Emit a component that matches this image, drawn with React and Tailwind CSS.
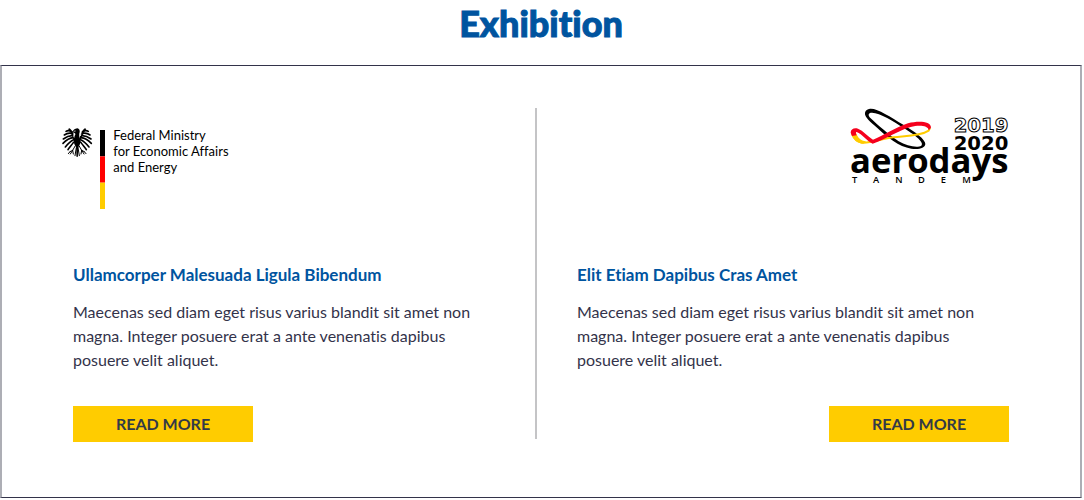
const FEATHERS = [
  "M66 51 C59 46 53 46 48 49",
  "M68 56 C59 53 50 55 43 60",
  "M69 62 C59 61 48 66 40 72",
  "M70 68 C60 69 48 76 39 85",
  "M71 74 C63 77 53 87 46 96",
  "M72 81 C67 86 60 96 54 104",
];

function Wing() {
  return (
    <g fill="none" stroke="#000" strokeLinecap="round" strokeLinejoin="round">
      {FEATHERS.map((d) => (
        <path key={d} d={d} strokeWidth="4.8" />
      ))}
      <path d="M58 43 C66 48 68 62 74 74 L76 86" strokeWidth="6" />
      <path d="M76 92 L68 106 L60 110 M68 106 L61 117 M68 106 L70 117 M60 110 L55 116" strokeWidth="3" />
      <path d="M79 98 L75 122 M80 98 L81 124" strokeWidth="3" />
    </g>
  );
}

function MinistryLogo() {
  return (
    <svg
      viewBox="36 36 501 249"
      className="-ml-[11px] mt-[19px] h-[83px] w-[167px] shrink-0"
      role="img"
      aria-label="Federal Ministry for Economic Affairs and Energy"
    >
      <Wing />
      <g transform="translate(163 0) scale(-1 1)">
        <Wing />
      </g>
      <path d="M74 62 C78 57 76 54 72 53 L66 52 C69 47 74 40 82 40 C89 41 91 49 88 55 C87 62 88 66 89 72 L89 88 L82 104 L74 88 L74 72 Z" fill="#000" />
      <path d="M71 49 L77 48" stroke="#fff" strokeWidth="2" />
      <path d="M73 57 C71 60 70 63 72 67 M91 46 C93 52 93 58 91 63" fill="none" stroke="#fff" strokeWidth="2.5" />
      <rect x="150" y="45" width="15" height="79" fill="#000" />
      <rect x="150" y="124" width="15" height="79" fill="#f00" />
      <rect x="150" y="203" width="15" height="79" fill="#fc0" />
      <g fill="#000" className="font-['Lato',sans-serif]" fontSize="39">
        <text x="190" y="76">Federal Ministry</text>
        <text x="190" y="123">for Economic Affairs</text>
        <text x="190" y="170">and Energy</text>
      </g>
    </svg>
  );
}

function AerodaysLogo() {
  return (
    <svg
      viewBox="27 24 480 231"
      className="ml-auto h-[77px] w-[160px] shrink-0"
      role="img"
      aria-label="Aerodays Tandem 2019 2020"
    >
      <path
        fillRule="evenodd"
        fill="#000"
        d="M90 26 C112 24 150 50 190 74 C226 96 256 118 256 132 C255 145 236 149 214 146 C176 140 142 112 112 84 C92 66 72 50 75 38 C77 30 82 27 90 26 Z M96 38 C84 38 83 46 92 55 C112 74 148 106 176 124 C200 138 232 144 244 137 C254 128 226 106 196 87 C160 64 120 38 96 38 Z"
      />
      <path
        d="M36 102 C42 118 52 126 66 128 C84 131 112 121 142 115 C180 107 236 112 266 92 L270 84"
        fill="none"
        stroke="#fc0"
        strokeWidth="6"
      />
      <path d="M34 98 C38 118 52 130 70 131 L78 124 C62 122 54 114 48 98 Z" fill="#fc0" />
      <path
        d="M32 98 C32 88 42 82 54 86 C70 92 82 108 99 119 C130 108 166 82 204 70 C236 62 272 64 273 82 C272 86 270 88 266 90 C264 78 240 74 212 81 C172 92 134 120 98 131 C82 124 66 102 50 96 C46 96 48 102 50 106 L36 108 Z"
        fill="#f5001d"
      />
      <g fontWeight="700">
        <g className="font-['DejaVu_Sans',sans-serif]" fontSize="59">
          <text x="341" y="95" fill="#fff" stroke="#000" strokeWidth="3">2019</text>
          <text x="341" y="150" fill="#000">2020</text>
        </g>
        <g className="font-['Open_Sans','Noto_Sans',sans-serif]" fill="#000">
          <text x="30" y="220" fontSize="104">aerodays</text>
          <text x="36 99 166 234 302 367" y="250" fontSize="28" fontWeight="600">TANDEM</text>
        </g>
      </g>
    </svg>
  );
}

function Exhibitor({ logo, title, alignEnd }) {
  return (
    <article className="flex min-w-0 flex-1 flex-col">
      <div className="flex h-[155px] items-start">{logo}</div>
      <h2 className="text-[17px] leading-6 font-bold text-[#00549f]">{title}</h2>
      <p className="mt-[13px] text-base leading-6 text-[#33334a]">
        Maecenas sed diam eget risus varius blandit sit amet non magna. Integer posuere erat a ante venenatis dapibus
        posuere velit aliquet.
      </p>
      <button
        type="button"
        className={
          "mt-[34px] h-9 w-[180px] cursor-pointer bg-[#fc0] text-base font-bold text-[#333a47] " +
          (alignEnd ? "self-end" : "self-start")
        }
      >
        READ MORE
      </button>
    </article>
  );
}

export default function App() {
  return (
    <main className="bg-white pr-[2px] font-['Lato',sans-serif] [font-variant-ligatures:none]">
      <h1 className="h-[65px] text-center text-4xl leading-[46px] font-black text-[#00549f] [-webkit-text-stroke:1px_#00549f]">
        Exhibition
      </h1>
      <section className="flex border-x-2 border-y border-x-[#adaeb5] border-y-[#33334a] px-[71px] pt-[42px] pb-[55px]">
        <Exhibitor logo={<MinistryLogo />} title="Ullamcorper Malesuada Ligula Bibendum" />
        <div className="mr-10 mb-[3px] ml-[30px] w-[2px] bg-[#c4c4c6]" />
        <Exhibitor logo={<AerodaysLogo />} title="Elit Etiam Dapibus Cras Amet" alignEnd />
      </section>
    </main>
  );
}
